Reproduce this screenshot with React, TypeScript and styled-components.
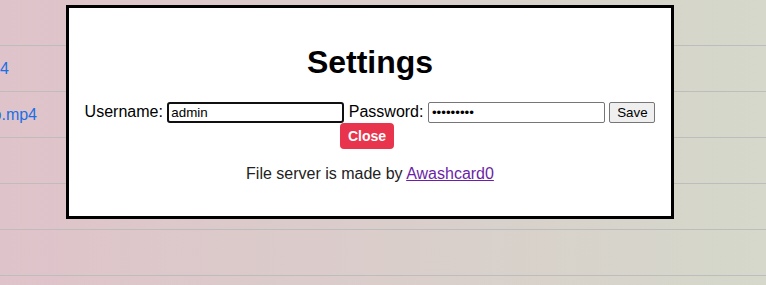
import { createGlobalStyle } from 'styled-components';
import styled from 'styled-components';

const GlobalStyle = createGlobalStyle`
    html, body {
        margin: 0;
        padding: 0;
    }
    body {
        font-family: 'Liberation Sans', Arial, sans-serif;
    }
`;

const Page = styled.div`
    position: relative;
    height: 100vh;
    background: linear-gradient(to right, #dfc3ca, #d5d8cb);
    overflow: hidden;
`;

const FileList = styled.div`
    display: flex;
    flex-direction: column;
`;

const FileRow = styled.div`
    display: flex;
    align-items: center;
    height: 45px;
    flex-shrink: 0;
    border-bottom: 1px solid #bdbdbd;
`;

const NameCell = styled.div<{ $end: number }>`
    display: flex;
    justify-content: flex-end;
    width: ${(p) => p.$end}px;
    flex-shrink: 0;
    white-space: nowrap;
`;

const FileLink = styled.a`
    color: #1a6fe6;
    font-size: 16px;
    text-decoration: none;
`;

const Modal = styled.div`
    position: absolute;
    top: 5px;
    left: 66px;
    width: 602px;
    padding: 15px 0 17px;
    background-color: #fff;
    border: 3px solid #000;
    text-align: center;
`;

const Title = styled.h1`
    margin: 21px 0;
    font-size: 32px;
    font-weight: bold;
    line-height: normal;
    color: #000;
`;

const SettingsForm = styled.form`
    margin: 0;
    font-size: 16px;
    color: #000;
`;

const TextInput = styled.input<{ $active?: boolean }>`
    box-sizing: border-box;
    width: 177px;
    height: 21px;
    font-family: 'Liberation Sans', Arial, sans-serif;
    font-size: 13.33px;
    color: #000;
    background: #fff;
    vertical-align: baseline;
    border: ${(p) => (p.$active ? '2px solid #101010' : '1px solid #767676')};
    border-radius: ${(p) => (p.$active ? '3px' : '2px')};
    padding: ${(p) => (p.$active ? '1px 2px' : '2px 3px')};
    &:focus {
        outline: none;
    }
`;

const SaveButton = styled.button`
    box-sizing: border-box;
    min-width: 46px;
    height: 21px;
    padding: 1px 6px;
    font-family: 'Liberation Sans', Arial, sans-serif;
    font-size: 13.33px;
    color: #000;
    background-color: #efefef;
    border: 1px solid #767676;
    border-radius: 2px;
`;

const CloseButton = styled.button`
    padding: 5px 8px;
    margin-right: 6px;
    font-family: 'Liberation Sans', Arial, sans-serif;
    font-size: 14px;
    font-weight: bold;
    color: #fff;
    background-color: #e8344c;
    border: none;
    border-radius: 4px;
    &:hover {
        cursor: pointer;
    }
`;

const Credit = styled.p`
    margin: 16px 0;
    font-size: 16px;
    color: #222;
`;

const CreditLink = styled.a`
    color: #6c1fa6;
    text-decoration: underline;
`;

const files = [
    { name: '', end: 0 },
    { name: 'movie_1.mp4', end: 9 },
    { name: 'demo.mp4', end: 37 },
    { name: '', end: 0 },
    { name: '', end: 0 },
    { name: '', end: 0 },
    { name: '', end: 0 },
];

export default function App() {
    return (
        <>
            <GlobalStyle />
            <Page>
                <FileList>
                    {files.map((f, i) => (
                        <FileRow key={i}>
                            <NameCell $end={f.end}>
                                {f.name && <FileLink href="#">{f.name}</FileLink>}
                            </NameCell>
                        </FileRow>
                    ))}
                </FileList>
                <Modal>
                    <Title>Settings</Title>
                    <SettingsForm onSubmit={(e) => e.preventDefault()}>
                        Username:{' '}
                        <TextInput $active type="text" defaultValue="admin" autoFocus />{' '}
                        Password:{' '}
                        <TextInput type="password" defaultValue="password1" />{' '}
                        <SaveButton type="submit">Save</SaveButton>{' '}
                        <CloseButton type="button">Close</CloseButton>
                    </SettingsForm>
                    <Credit>
                        File server is made by <CreditLink href="#">Awashcard0</CreditLink>
                    </Credit>
                </Modal>
            </Page>
        </>
    );
}
